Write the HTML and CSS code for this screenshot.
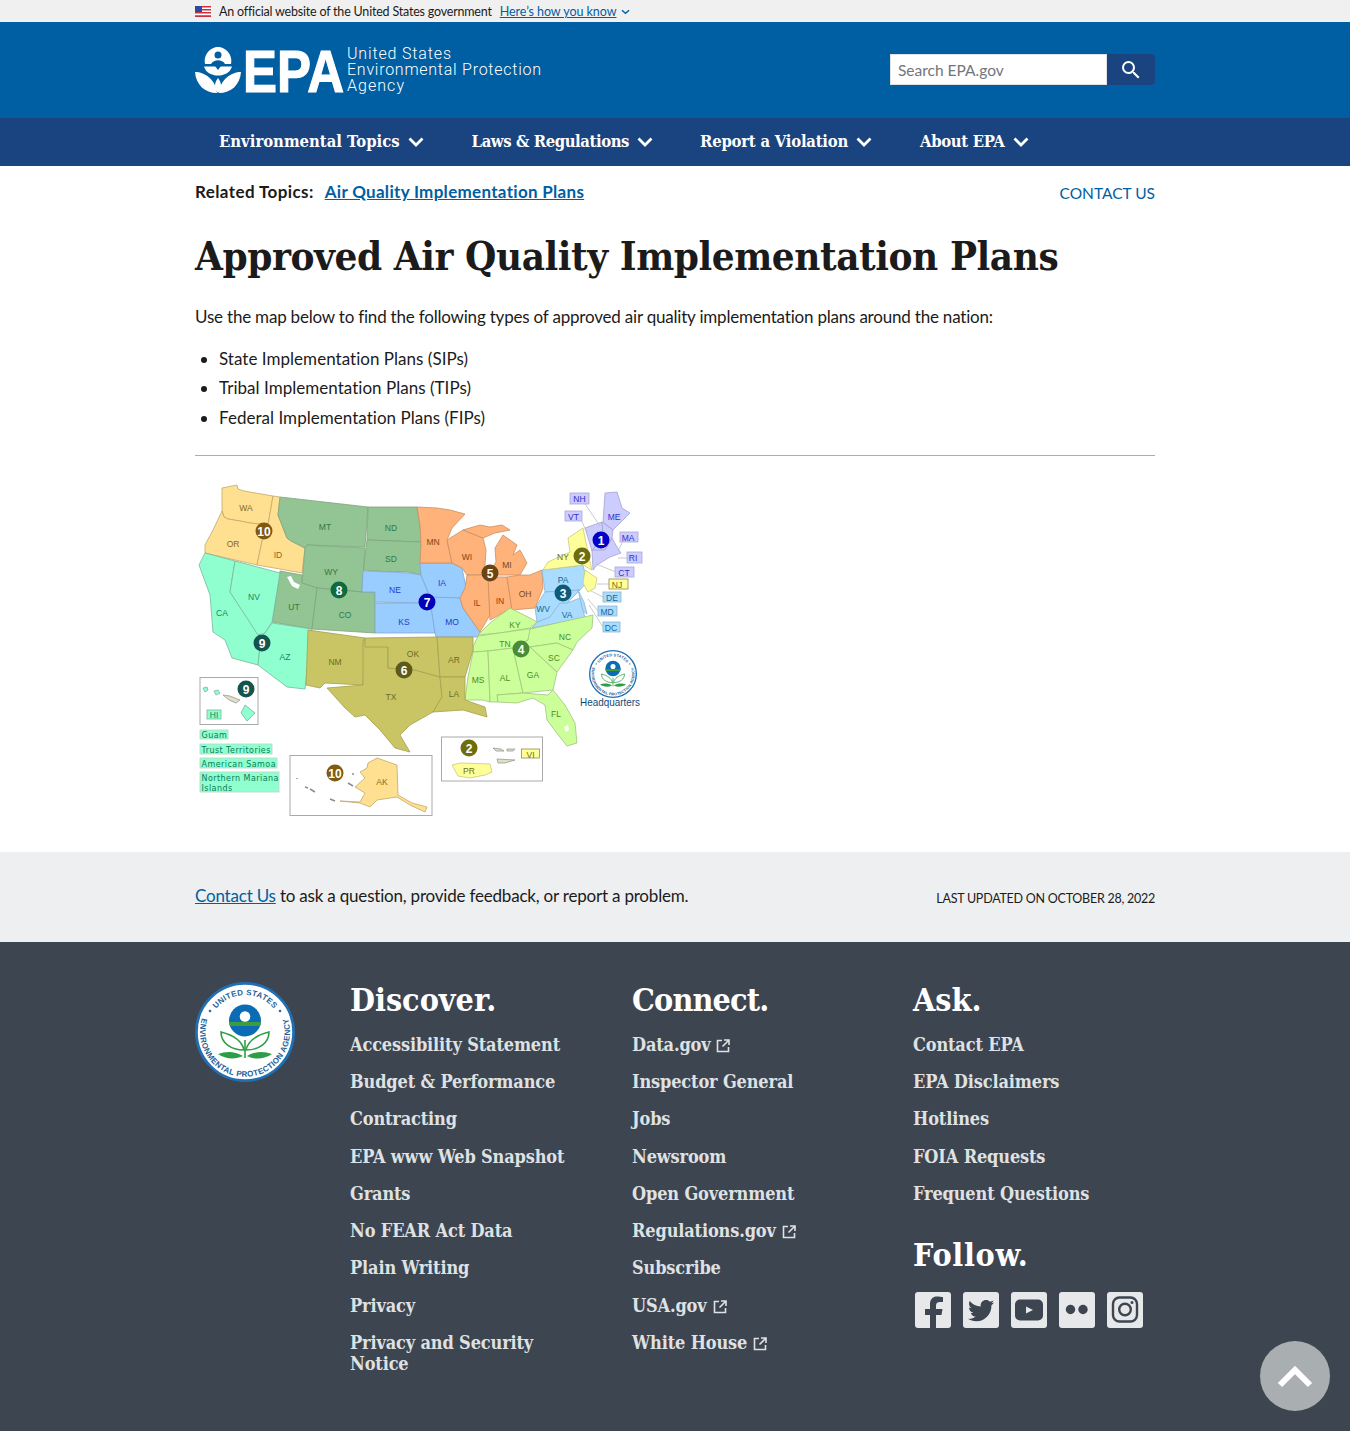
FILE: index.html
```html
<!DOCTYPE html>
<html lang="en">
<head>
<meta charset="utf-8">
<title>Approved Air Quality Implementation Plans | US EPA</title>
<link rel="stylesheet" href="styles.css">
</head>
<body>
<svg class="defs" width="0" height="0" aria-hidden="true">
  <defs>
    <path id="arcTop" d="M13 50a37 37 0 0 1 74 0"/>
    <path id="arcBottom" d="M13 24.200A45 45 0 1 0 87 24.200"/>
    <symbol id="seal" viewBox="0 0 100 100">
      <circle cx="50" cy="50" r="48.600" fill="#fff" stroke="#1f6fb2" stroke-width="2.800"/>
      <text class="seal-text"><textPath href="#arcTop" startOffset="50%" text-anchor="middle">UNITED STATES</textPath></text>
      <text class="seal-text"><textPath href="#arcBottom" startOffset="50%" text-anchor="middle">ENVIRONMENTAL PROTECTION AGENCY</textPath></text>
      <circle cx="15" cy="29" r="1.300" fill="#1f6fb2"/><circle cx="85" cy="29" r="1.300" fill="#1f6fb2"/>
      <circle cx="50" cy="38.500" r="16" fill="#0b6cb5"/>
      <path d="M34.300 40h31.400a16 16 0 0 1-.6 4H34.900a16 16 0 0 1-.6-4z" fill="#3f9c3a"/>
      <circle cx="50" cy="34.500" r="5.300" fill="#fff"/>
      <path d="M50 76V58" stroke="#2e9e46" stroke-width="1.600" fill="none"/>
      <path d="M49 68C47 59 38 53 26 50c0 11 10 18 23 18z" fill="#fff" stroke="#2e9e46" stroke-width="1.600"/>
      <path d="M51 68C53 59 62 53 74 50c0 11-10 18-23 18z" fill="#fff" stroke="#2e9e46" stroke-width="1.600"/>
      <path d="M48 74c-8-5-17-5-25-2 7 5 17 6 25 2zM52 74c8-5 17-5 25-2-7 5-17 6-25 2z" fill="#2e9e46"/>
    </symbol>
  </defs>
</svg>

<div class="gov-banner">
  <div class="wrap gov-inner">
    <svg class="flag" viewBox="0 0 16 11" width="16" height="11" aria-hidden="true">
      <rect width="16" height="11" fill="#fff"/>
      <path d="M0 0h16v1.500H0zM0 3h16v1.500H0zM0 6h16v1.500H0zM0 9.200h16V11H0z" fill="#c8313e"/>
      <rect width="7" height="6" fill="#2e4a9e"/>
    </svg>
    <span class="gov-text">An official website of the United States government</span>
    <a class="gov-link" href="#">Here’s how you know</a>
    <svg class="gov-chev" viewBox="0 0 10 6" width="9" height="6" aria-hidden="true"><path d="M1 1l4 3.500L9 1" fill="none" stroke="#005ea2" stroke-width="1.500"/></svg>
  </div>
</div>

<header class="site-header">
  <div class="wrap header-inner">
    <svg class="logo" viewBox="0 0 347 50" width="347" height="50" role="img" aria-label="EPA United States Environmental Protection Agency">
      <path d="M10 18C8 8 16 1 23 1s15 7 13 17z" fill="#fff"/>
      <circle cx="23" cy="9" r="3.500" fill="#005ea2"/>
      <path d="M16 18c3-5 11-5 14 0z" fill="#005ea2"/>
      <path d="M9 20.500h28C35 27 29 29.500 23 29.500S11 27 9 20.500z" fill="#fff"/>
      <path d="M20 20h6l-3 4z" fill="#005ea2"/>
      <path d="M0 26c10 0 21 8 22 21C10 47 1 39 0 26zM46 26c-10 0-21 8-22 21 12 0 21-8 22-21z" fill="#fff"/>
      <path d="M23 32c4 5 4 10 0 15-4-5-4-10 0-15z" fill="#fff"/>
      <text class="logo-epa" x="48" y="45.500" textLength="101" lengthAdjust="spacingAndGlyphs">EPA</text>
      <text class="logo-line" x="152" y="13" textLength="104" lengthAdjust="spacing">United States</text>
      <text class="logo-line" x="152" y="29" textLength="194" lengthAdjust="spacing">Environmental Protection</text>
      <text class="logo-line" x="152" y="45" textLength="57" lengthAdjust="spacing">Agency</text>
    </svg>
    <form class="search">
      <input class="search-input" type="text" placeholder="Search EPA.gov" aria-label="Search">
      <button class="search-btn" type="button" aria-label="Search">
        <svg viewBox="0 0 24 24" width="24" height="24"><path d="M15.500 14h-.79l-.28-.27A6.470 6.470 0 0 0 16 9.500 6.500 6.500 0 1 0 9.500 16c1.610 0 3.090-.59 4.230-1.570l.27.28v.79l5 4.990L20.490 19l-4.990-5zm-6 0C7.010 14 5 11.990 5 9.500S7.010 5 9.500 5 14 7.010 14 9.500 11.990 14 9.500 14z" fill="#fff"/></svg>
      </button>
    </form>
  </div>
</header>

<nav class="main-nav">
  <div class="wrap nav-inner">
    <a class="nav-item nav-1" href="#">Environmental Topics<svg class="nav-chev" viewBox="0 0 16 10" width="16" height="10"><path d="M1.500 1.500L8 8l6.500-6.500" fill="none" stroke="#fff" stroke-width="2.800"/></svg></a>
    <a class="nav-item nav-2" href="#">Laws &amp; Regulations<svg class="nav-chev" viewBox="0 0 16 10" width="16" height="10"><path d="M1.500 1.500L8 8l6.500-6.500" fill="none" stroke="#fff" stroke-width="2.800"/></svg></a>
    <a class="nav-item nav-3" href="#">Report a Violation<svg class="nav-chev" viewBox="0 0 16 10" width="16" height="10"><path d="M1.500 1.500L8 8l6.500-6.500" fill="none" stroke="#fff" stroke-width="2.800"/></svg></a>
    <a class="nav-item nav-4" href="#">About EPA<svg class="nav-chev" viewBox="0 0 16 10" width="16" height="10"><path d="M1.500 1.500L8 8l6.500-6.500" fill="none" stroke="#fff" stroke-width="2.800"/></svg></a>
  </div>
</nav>

<main class="wrap content">
  <div class="topic-row">
    <div class="related"><strong class="related-label">Related Topics:</strong><a class="related-link" href="#">Air Quality Implementation Plans</a></div>
    <a class="contact-top" href="#">CONTACT US</a>
  </div>
  <h1 class="page-title">Approved Air Quality Implementation Plans</h1>
  <p class="intro">Use the map below to find the following types of approved air quality implementation plans around the nation:</p>
  <ul class="plan-list">
    <li>State Implementation Plans (SIPs)</li>
    <li>Tribal Implementation Plans (TIPs)</li>
    <li>Federal Implementation Plans (FIPs)</li>
  </ul>
  <hr class="rule">
  <svg class="region-map" viewBox="195 480 450 340" width="450" height="340" role="img" aria-label="Map of EPA regions">
    <g class="r10">
      <polygon points="222,488 237,485 238,489 244,491 273,496 268,525 250,523 240,521 228,519 224,517 222,510"/>
      <polygon points="222,511 224,517 228,519 240,521 250,523 268,525 264,535 262,541 257,565 222,557 205,553 205,545 213,530"/>
      <polygon points="273,496 280,497 278,515 287,538 291,541 305,548 302,573 280,569 257,565 262,541 268,525"/>
    </g>
    <g class="r8">
      <polygon points="280,497 368,507 365,547 307,545 305,548 291,541 287,538 278,515"/>
      <polygon points="368,507 417,507 420,525 422,542 367,540"/>
      <polygon points="367,540 422,542 421,575 408,572 390,572 363,570"/>
      <polygon points="307,545 365,548 362,592 317,588 302,583 305,548"/>
      <polygon points="280,571 302,575 302,583 317,588 312,629 272,622"/>
      <polygon points="317,588 362,592 375,592 375,633 312,629"/>
    </g>
    <polygon class="lake" points="287,577 291,576 294,582 300,585 298,589 292,586"/>
    <g class="r9">
      <polygon points="205,553 235,561 230,592 261,637 258,665 232,658 225,640 213,632 210,595 199,565"/>
      <polygon points="235,561 280,573 272,622 265,633 258,635 230,592"/>
      <polygon points="272,623 312,629 305,689 287,687 258,665 261,637 265,633"/>
    </g>
    <g class="r7">
      <polygon points="363,571 390,572 408,573 421,575 427,590 430,603 375,602 375,592 362,592"/>
      <polygon points="375,603 430,603 431,606 435,633 375,633"/>
      <polygon points="420,563 452,563 462,568 466,587 460,598 435,598 430,596 426,587 421,575"/>
      <polygon points="430,597 460,598 463,608 470,618 480,632 478,637 436,637 435,633 431,606"/>
    </g>
    <g class="r5">
      <polygon points="417,507 437,508 450,510 465,514 452,528 447,540 452,563 420,563 421,545 420,525"/>
      <polygon points="447,540 463,530 483,538 486,550 485,565 482,575 467,575 462,568 452,563"/>
      <polygon points="463,530 480,525 490,527 502,525 510,530 495,533 483,538"/>
      <polygon points="495,548 503,535 517,545 513,555 520,550 527,563 520,575 488,575 496,562"/>
      <polygon points="467,575 488,575 490,615 480,632 463,608 460,598 465,588"/>
      <polygon points="488,577 507,577 512,608 490,620"/>
      <polygon points="507,577 520,575 530,575 542,570 543,588 535,608 512,610"/>
    </g>
    <g class="r3">
      <polygon points="542,570 583,565 587,582 580,590 545,592"/>
      <polygon points="532,628 585,618 580,598 567,603 555,600 550,617 537,622"/>
      <polygon points="545,592 580,590 567,603 560,603 550,617 537,622 535,608"/>
      <polygon points="578,590 584,602 587,614 583,611 580,598"/>
    </g>
    <g class="r2">
      <polygon points="548,562 570,552 568,538 583,528 590,562 592,570 583,565 543,570"/>
      <polygon points="585,570 597,578 595,588 588,592 583,583"/>
    </g>
    <g class="r1">
      <polygon points="605,493 617,492 622,508 630,513 613,530 603,522"/>
      <polygon points="585,528 602,522 603,535 592,551"/>
      <polygon points="602,522 613,530 612,538 605,550 592,551 603,535"/>
      <polygon points="592,550 605,550 612,538 617,547 621,553 610,557 597,565 593,570"/>
    </g>
    <g class="r4">
      <polygon points="478,635 490,623 510,608 530,618 537,622 530,628 500,633"/>
      <polygon points="473,647 478,636 535,628 528,640 513,648 488,651 473,652"/>
      <polygon points="530,629 593,615 592,628 577,642 573,650 557,643 530,647 513,648 528,640"/>
      <polygon points="473,652 488,651 490,702 483,700 465,700 468,677"/>
      <polygon points="488,651 513,648 523,693 497,695 498,702 490,702"/>
      <polygon points="513,648 530,647 557,672 553,690 523,693"/>
      <polygon points="530,647 557,643 573,650 557,672"/>
      <polygon points="497,695 523,693 548,695 553,690 565,705 575,723 577,743 567,746 556,732 547,720 545,705 533,698 517,703 498,702"/>
    </g>
    <polygon class="lake" points="564,727 568,725 569,730 566,732"/>
    <g class="r6">
      <polygon points="308,630 365,638 363,685 325,683 320,688 306,685"/>
      <polygon points="363,640 388,640 388,668 415,670 440,677 442,697 433,712 410,725 400,735 410,752 395,748 380,730 365,715 355,717 345,708 327,688 363,685"/>
      <polygon points="365,638 437,637 440,677 415,670 388,668 388,647 365,647"/>
      <polygon points="437,637 473,637 473,650 465,677 440,677"/>
      <polygon points="440,677 465,677 465,700 485,707 487,717 463,710 433,712 442,697"/>
    </g>
    <g class="labels">
      <text class="l10" x="246" y="511">WA</text><text class="l10" x="233" y="547">OR</text><text class="l10" x="278" y="558">ID</text>
      <text class="l8" x="325" y="530">MT</text><text class="l8" x="391" y="531">ND</text><text class="l8" x="391" y="562">SD</text><text class="l8" x="331" y="575">WY</text><text class="l8" x="294" y="610">UT</text><text class="l8" x="345" y="618">CO</text>
      <text class="l9" x="222" y="616">CA</text><text class="l9" x="254" y="600">NV</text><text class="l9" x="285" y="660">AZ</text>
      <text class="l7" x="395" y="593">NE</text><text class="l7" x="404" y="625">KS</text><text class="l7" x="442" y="586">IA</text><text class="l7" x="452" y="625">MO</text>
      <text class="l5" x="433" y="545">MN</text><text class="l5" x="467" y="560">WI</text><text class="l5" x="507" y="568">MI</text><text class="l5" x="477" y="606">IL</text><text class="l5" x="500" y="604">IN</text><text class="l5" x="525" y="597">OH</text>
      <text class="l3" x="563" y="583">PA</text><text class="l3" x="543" y="612">WV</text><text class="l3" x="567" y="618">VA</text>
      <text class="l2" x="563" y="560">NY</text><text class="l1" x="614" y="520">ME</text>
      <text class="l4" x="515" y="628">KY</text><text class="l4" x="505" y="647">TN</text><text class="l4" x="565" y="640">NC</text><text class="l4" x="554" y="661">SC</text><text class="l4" x="533" y="678">GA</text><text class="l4" x="505" y="681">AL</text><text class="l4" x="478" y="683">MS</text><text class="l4" x="556" y="717">FL</text>
      <text class="l6" x="454" y="663">AR</text><text class="l6" x="454" y="697">LA</text><text class="l6" x="413" y="657">OK</text><text class="l6" x="391" y="700">TX</text><text class="l6" x="335" y="665">NM</text>
    </g>
    <path class="leaders" d="M585 504l15 22M581 520l6 12M623 541l-5 10M627 558h-9M616 572l-20-8M609 584h-12M603 597l-12-6M598 611l-10-12M603 627l-14-22"/>
    <g class="tags">
      <rect class="tag1" x="570" y="493" width="19" height="11"/><text class="l1" x="579.500" y="502">NH</text>
      <rect class="tag1" x="565" y="511" width="17" height="10"/><text class="l1" x="573.500" y="519.500">VT</text>
      <rect class="tag1" x="620" y="532" width="18" height="10"/><text class="l1" x="628" y="540.500">MA</text>
      <rect class="tag1" x="627" y="552" width="15" height="11"/><text class="l1" x="633" y="561">RI</text>
      <rect class="tag1" x="615" y="567" width="19" height="10"/><text class="l1" x="624" y="575.500">CT</text>
      <rect class="tag2" x="609" y="579" width="19" height="10"/><text class="l2" x="617" y="587.500">NJ</text>
      <rect class="tag3" x="603" y="592" width="18" height="10"/><text class="l3" x="612" y="600.500">DE</text>
      <rect class="tag3" x="598" y="606" width="19" height="10"/><text class="l3" x="607" y="614.500">MD</text>
      <rect class="tag3" x="603" y="622" width="17" height="10"/><text class="l3" x="611" y="630.500">DC</text>
    </g>
    <g class="inset-boxes">
      <rect x="200" y="677.500" width="58" height="47"/>
      <rect x="290" y="755.500" width="142" height="60"/>
      <rect x="441.500" y="737" width="101" height="44"/>
    </g>
    <g class="r9">
      <polygon points="203,688 207,687 208,690 205,692"/>
      <polygon points="214,691 218,690 220,693 216,695"/>
      <polygon class="dim" points="223,695 230,696 240,700 236,703 229,700"/>
      <polygon points="245,705 255,713 247,721 241,713"/>
    </g>
    <g class="tags tags9">
      <rect x="207" y="710" width="14" height="9"/><text x="214" y="718">HI</text>
    </g>
    <g class="territories">
      <rect x="200" y="730" width="28" height="9"/><text x="201.500" y="738">Guam</text>
      <rect x="200" y="744" width="72" height="10"/><text x="201.500" y="752.500">Trust Territories</text>
      <rect x="200" y="758" width="77" height="10"/><text x="201.500" y="766.500">American Samoa</text>
      <rect x="200" y="772" width="79" height="20"/><text x="201.500" y="780.500">Northern Mariana</text><text x="201.500" y="791">Islands</text>
    </g>
    <g class="r10">
      <polygon points="368,763 377,758 397,765 398,795 412,803 427,807 425,812 410,805 397,797 377,800 370,807 360,803 340,801 360,802 365,793 355,787 365,778 360,772 367,768"/>
    </g>
    <path class="island" d="M297 778v1M305 787l3 1M310 789l5 3M330 799l5 2M348 783l5 3M353 773v2"/>
    <text class="l10 map-label" x="382" y="785">AK</text>
    <g class="r2">
      <polygon points="452,765 460,763 490,764 492,772 485,775 470,778 458,776"/>
      <polygon class="dim" points="493,748 501,749 504,751 496,751"/>
      <polygon class="dim" points="507,749 515,749 513,751 507,751"/>
      <polygon class="dim" points="497,759 515,760 505,763 498,763"/>
      <rect class="tag-vi" x="521.500" y="749" width="18" height="9"/>
    </g>
    <text class="l2 map-label" x="469" y="774">PR</text><text class="l2 map-label" x="530.500" y="757.500">VI</text>
    <g class="badges">
      <circle class="b10" cx="264" cy="531" r="8.500"/><text x="264" y="535.500">10</text>
      <circle class="b8" cx="339" cy="590" r="8.500"/><text x="339" y="594.500">8</text>
      <circle class="b9" cx="262" cy="643" r="8.500"/><text x="262" y="647.500">9</text>
      <circle class="b7" cx="427" cy="602" r="8.500"/><text x="427" y="606.500">7</text>
      <circle class="b5" cx="490" cy="573" r="8.500"/><text x="490" y="577.500">5</text>
      <circle class="b2" cx="582" cy="556" r="8.500"/><text x="582" y="560.500">2</text>
      <circle class="b1" cx="601" cy="540" r="8.500"/><text x="601" y="544.500">1</text>
      <circle class="b3" cx="563" cy="593" r="8.500"/><text x="563" y="597.500">3</text>
      <circle class="b4" cx="521" cy="649" r="8.500"/><text x="521" y="653.500">4</text>
      <circle class="b6" cx="404" cy="670" r="8.500"/><text x="404" y="674.500">6</text>
      <circle class="b9" cx="246" cy="689" r="8.500"/><text x="246" y="693.500">9</text>
      <circle class="b10" cx="335" cy="773" r="8.500"/><text x="335" y="777.500">10</text>
      <circle class="b2" cx="469" cy="748" r="8.500"/><text x="469" y="752.500">2</text>
    </g>
    <use href="#seal" x="589" y="650" width="48" height="48"/>
    <text class="hq" x="610" y="706" textLength="60" lengthAdjust="spacingAndGlyphs">Headquarters</text>
  </svg>
</main>

<section class="feedback">
  <div class="wrap feedback-inner">
    <p class="feedback-text"><a href="#">Contact Us</a> to ask a question, provide feedback, or report a problem.</p>
    <p class="updated">LAST UPDATED ON OCTOBER 28, 2022</p>
  </div>
</section>

<footer class="site-footer">
  <div class="wrap footer-grid">
    <svg class="footer-seal" width="100" height="100" role="img" aria-label="EPA seal"><use href="#seal" width="100" height="100"/></svg>
    <div class="footer-col">
      <h2 class="footer-title">Discover.</h2>
      <ul class="footer-links">
        <li><a href="#">Accessibility Statement</a></li>
        <li><a href="#">Budget &amp; Performance</a></li>
        <li><a href="#">Contracting</a></li>
        <li><a href="#">EPA www Web Snapshot</a></li>
        <li><a href="#">Grants</a></li>
        <li><a href="#">No FEAR Act Data</a></li>
        <li><a href="#">Plain Writing</a></li>
        <li><a href="#">Privacy</a></li>
        <li><a href="#">Privacy and Security Notice</a></li>
      </ul>
    </div>
    <div class="footer-col">
      <h2 class="footer-title title-connect">Connect.</h2>
      <ul class="footer-links">
        <li><a href="#">Data.gov<svg class="ext" viewBox="0 0 14 14" width="14" height="14"><path d="M6 1.500H1.500v11h11V8M8 1h5v5M13 1L6.500 7.500" fill="none" stroke="#dfe1e2" stroke-width="1.600"/></svg></a></li>
        <li><a href="#">Inspector General</a></li>
        <li><a href="#">Jobs</a></li>
        <li><a href="#">Newsroom</a></li>
        <li><a href="#">Open Government</a></li>
        <li><a href="#">Regulations.gov<svg class="ext" viewBox="0 0 14 14" width="14" height="14"><path d="M6 1.500H1.500v11h11V8M8 1h5v5M13 1L6.500 7.500" fill="none" stroke="#dfe1e2" stroke-width="1.600"/></svg></a></li>
        <li><a href="#">Subscribe</a></li>
        <li><a href="#">USA.gov<svg class="ext" viewBox="0 0 14 14" width="14" height="14"><path d="M6 1.500H1.500v11h11V8M8 1h5v5M13 1L6.500 7.500" fill="none" stroke="#dfe1e2" stroke-width="1.600"/></svg></a></li>
        <li><a href="#">White House<svg class="ext" viewBox="0 0 14 14" width="14" height="14"><path d="M6 1.500H1.500v11h11V8M8 1h5v5M13 1L6.500 7.500" fill="none" stroke="#dfe1e2" stroke-width="1.600"/></svg></a></li>
      </ul>
    </div>
    <div class="footer-col">
      <h2 class="footer-title">Ask.</h2>
      <ul class="footer-links">
        <li><a href="#">Contact EPA</a></li>
        <li><a href="#">EPA Disclaimers</a></li>
        <li><a href="#">Hotlines</a></li>
        <li><a href="#">FOIA Requests</a></li>
        <li><a href="#">Frequent Questions</a></li>
      </ul>
      <h2 class="footer-title follow">Follow.</h2>
      <div class="social">
        <a class="social-icon" href="#" aria-label="Facebook"><svg viewBox="0 0 36 36" width="36" height="36"><rect width="36" height="36" rx="3" fill="#e6e8ea"/><path d="M15 36V23h-5v-6h5v-5c0-5 3-7.500 7-7.500 2 0 4.500.3 6 .6V10h-3c-2.500 0-4 1-4 3.500V17h6.500l-1 6H21v13z" fill="#3d4551"/></svg></a>
        <a class="social-icon" href="#" aria-label="Twitter"><svg viewBox="0 0 36 36" width="36" height="36"><rect width="36" height="36" rx="3" fill="#e6e8ea"/><g transform="translate(3 3) scale(1.250)"><path d="M22.460 6c-.77.35-1.600.58-2.460.69.88-.53 1.560-1.370 1.880-2.380-.83.5-1.750.85-2.720 1.050C18.370 4.500 17.260 4 16 4c-2.350 0-4.270 1.920-4.270 4.290 0 .34.04.67.11.98C8.280 9.090 5.110 7.380 3 4.790c-.37.63-.58 1.370-.58 2.150 0 1.490.75 2.810 1.910 3.560-.71 0-1.370-.2-1.950-.5v.03c0 2.080 1.480 3.820 3.440 4.210a4.220 4.220 0 0 1-1.930.07 4.280 4.280 0 0 0 4 2.980 8.521 8.521 0 0 1-5.330 1.840c-.34 0-.68-.02-1.020-.06C3.440 20.290 5.700 21 8.120 21 16 21 20.330 14.460 20.330 8.790c0-.19 0-.37-.01-.56.84-.6 1.560-1.360 2.140-2.230z" fill="#3d4551"/></g></svg></a>
        <a class="social-icon" href="#" aria-label="YouTube"><svg viewBox="0 0 36 36" width="36" height="36"><rect width="36" height="36" rx="3" fill="#e6e8ea"/><rect x="4" y="7.500" width="28" height="21" rx="5" fill="#3d4551"/><path d="M15 14.500l7 3.500-7 3.500z" fill="#e6e8ea"/></svg></a>
        <a class="social-icon" href="#" aria-label="Flickr"><svg viewBox="0 0 36 36" width="36" height="36"><rect width="36" height="36" rx="3" fill="#e6e8ea"/><circle cx="11.500" cy="17.500" r="4.700" fill="#3d4551"/><circle cx="24" cy="17.500" r="4.700" fill="#3d4551"/></svg></a>
        <a class="social-icon" href="#" aria-label="Instagram"><svg viewBox="0 0 36 36" width="36" height="36"><rect width="36" height="36" rx="3" fill="#e6e8ea"/><rect x="6" y="5.500" width="24" height="24" rx="6.500" fill="none" stroke="#3d4551" stroke-width="2.400"/><circle cx="18" cy="17.500" r="5.800" fill="none" stroke="#3d4551" stroke-width="2.400"/><circle cx="25" cy="10.500" r="1.500" fill="#3d4551"/></svg></a>
      </div>
    </div>
  </div>
</footer>

<a class="to-top" href="#" aria-label="Back to top"><svg viewBox="0 0 36 24" width="36" height="24"><path d="M3 21L18 6l15 15" fill="none" stroke="#fff" stroke-width="6"/></svg></a>
</body>
</html>
```
FILE: styles.css
```css
* { box-sizing: border-box; }
html, body { margin: 0; padding: 0; }
body {
  font-family: "Lato", "Liberation Sans", sans-serif;
  font-size: 17px;
  line-height: 1.5;
  color: #1b1b1b;
  background: #fff;
}
a { color: #005ea2; }
.defs { position: absolute; }
.wrap { width: 960px; margin: 0 auto; }

.gov-banner { height: 22px; background: #f0f0f0; font-size: 12.500px; line-height: 20px; }
.gov-inner { display: flex; align-items: center; height: 22px; }
.flag { margin-right: 8px; }
.gov-text { margin-right: 8px; padding-top: 2px; letter-spacing: -.2px; }
.gov-link { padding-top: 2px; letter-spacing: -.05px; }
.gov-chev { margin: 2px 0 0 5px; }

.site-header { height: 96px; background: #005ea2; }
.header-inner { height: 96px; display: flex; align-items: center; justify-content: space-between; }
.logo { display: block; margin-top: 1px; overflow: visible; }
.logo-epa { font-family: "Liberation Sans", sans-serif; font-weight: 700; font-size: 60px; fill: #fff; stroke: #fff; stroke-width: 1.200px; }
.logo-line { font-family: "Roboto", sans-serif; font-weight: 300; font-size: 16px; fill: #fff; }
.search { display: flex; margin-bottom: 1px; }
.search-input { width: 217px; height: 31px; border: 1px solid #dfe1e2; border-radius: 0; padding: 0 7px; font: 15.500px "Lato", sans-serif; background: #fff; }
.search-input::placeholder { color: #71767a; opacity: 1; }
.search-btn { width: 48px; height: 31px; padding: 0; border: 0; border-radius: 0 4px 4px 0; background: #1a4480; display: flex; align-items: center; justify-content: center; }

.main-nav { height: 48px; background: #1a4480; }
.nav-inner { display: flex; height: 48px; align-items: center; }
.nav-item { display: flex; align-items: center; padding: 0 24px; color: #fff; text-decoration: none; font-family: "DejaVu Serif Condensed", "DejaVu Serif", serif; font-weight: 700; font-size: 16.500px; }
.nav-1 { letter-spacing: 0; }
.nav-2 { letter-spacing: -.4px; margin-right: -1px; }
.nav-3 { letter-spacing: -.22px; }
.nav-4 { letter-spacing: -.33px; }
.nav-chev { margin-left: 8px; }

.content { padding-top: 12px; }
.topic-row { display: flex; justify-content: space-between; align-items: center; height: 27px; }
.related { display: flex; font-size: 17px; }
.related-label { margin-right: 11px; color: #1b1b1b; letter-spacing: .4px; }
.related-link { font-weight: 700; letter-spacing: .3px; }
.contact-top { text-decoration: none; margin-top: 4px; font-size: 15.500px; }
.page-title { margin: 25px 0 0; font-family: "DejaVu Serif Condensed", "DejaVu Serif", serif; font-weight: 700; font-size: 40px; line-height: 52px; color: #1b1b1b; letter-spacing: -.44px; }
.intro { margin: 22px 0 0; font-size: 17px; line-height: 26px; letter-spacing: -.2px; }
.plan-list { margin: 15.700px 0 0; padding: 0 0 0 24px; }
.plan-list li { height: 29.500px; line-height: 26px; letter-spacing: .03px; }
.rule { margin: 20.800px 0 0; border: 0; border-top: 1px solid #a9aeb1; }
.region-map { display: block; margin-top: 24px; margin-bottom: 32px; }

.r10 polygon { fill: #ffdf90; stroke: #c2a96a; stroke-width: .8; }
.r8 polygon { fill: #93c493; stroke: #7da57d; stroke-width: .8; }
.r9 polygon { fill: #8fffcf; stroke: #75b99c; stroke-width: .8; }
.r7 polygon { fill: #99ccff; stroke: #80a8cf; stroke-width: .8; }
.r5 polygon { fill: #ffb27a; stroke: #c98f62; stroke-width: .8; }
.r3 polygon { fill: #aadcff; stroke: #8cb5d2; stroke-width: .8; }
.r2 polygon { fill: #ffff99; stroke: #c9c97a; stroke-width: .8; }
.r1 polygon { fill: #ccccff; stroke: #a3a3cf; stroke-width: .8; }
.r4 polygon { fill: #ccff99; stroke: #9fc47c; stroke-width: .8; }
.r6 polygon { fill: #c9c564; stroke: #a3a050; stroke-width: .8; }
.region-map .dim { fill: #dfe0c8; stroke: #999; }
.lake { fill: #fff; }
.labels text, .tags text, .map-label { font-family: "Liberation Sans", sans-serif; font-size: 8.500px; text-anchor: middle; }
.l10 { fill: #7d6a2c; }
.l8 { fill: #2f7a44; }
.l9 { fill: #0e8a63; }
.l7 { fill: #1f3cc4; }
.l5 { fill: #7a4a18; }
.l3 { fill: #0f6a94; }
.l2 { fill: #6e6e14; }
.l1 { fill: #2f2fc7; }
.l4 { fill: #4a8c22; }
.l6 { fill: #6d6a24; }
.leaders { fill: none; stroke: #b9bdc3; stroke-width: .8; }
.tags rect { stroke-width: .8; }
.tag1 { fill: #ccccff; stroke: #a9a9d9; }
.tag2 { fill: #ffff99; stroke: #8d8d55; }
.tag3 { fill: #aadcff; stroke: #8cb5d2; }
.tag-vi { fill: #ffff99; stroke: #8d8d55; stroke-width: .8; }
.inset-boxes rect { fill: #fff; stroke: #aaa; stroke-width: 1; }
.tags9 rect { fill: #8fffcf; stroke: #75b99c; }
.tags9 text { fill: #0e8a63; }
.territories rect { fill: #8fffcf; stroke: #b5d6c8; stroke-width: .8; }
.territories text { font-family: "DejaVu Sans", sans-serif; font-size: 8px; letter-spacing: .45px; fill: #0a7d58; }
.island { fill: none; stroke: #8a8f8c; stroke-width: 1.500; }
.badges text { font-family: "Liberation Sans", sans-serif; font-weight: 700; font-size: 12px; fill: #fff; text-anchor: middle; }
.b10 { fill: #7f5a10; }
.b8 { fill: #0e6a3f; }
.b9 { fill: #14544e; }
.b7 { fill: #0000b8; }
.b5 { fill: #6a4412; }
.b2 { fill: #6e6e0c; }
.b1 { fill: #0000c8; }
.b3 { fill: #0e5a78; }
.b4 { fill: #4a8c36; }
.b6 { fill: #5c5a1c; }
.hq { font-family: "Liberation Sans", sans-serif; font-size: 10.500px; fill: #0d4a78; text-anchor: middle; }
.seal-text { font-family: "Liberation Sans", sans-serif; font-weight: 700; font-size: 8px; letter-spacing: .3px; fill: #1f5f99; }

.feedback { height: 90px; background: #edeff0; }
.feedback-inner { height: 90px; display: flex; align-items: center; justify-content: space-between; }
.feedback-text { margin: 0 0 2px; letter-spacing: -.2px; }
.updated { margin: 4px 0 0; font-size: 12.500px; letter-spacing: -.25px; }

.site-footer { height: 489px; background: #3d4551; overflow: hidden; }
.footer-grid { display: grid; grid-template-columns: 155px 282px 281px 242px; padding-top: 40px; }
.footer-seal { display: block; }
.footer-title { margin: 0; font-family: "DejaVu Serif Condensed", "DejaVu Serif", serif; font-weight: 700; font-size: 32px; line-height: 36px; color: #fff; }
.title-connect { letter-spacing: -.85px; }
.footer-links { list-style: none; margin: 16px 0 0; padding: 0; width: 240px; }
.footer-links li { margin-bottom: 16.250px; line-height: 21px; }
.footer-links a { color: #dfe1e2; text-decoration: none; font-family: "DejaVu Serif Condensed", "DejaVu Serif", serif; font-weight: 700; font-size: 18px; letter-spacing: -.15px; }
.ext { margin-left: 6px; vertical-align: -2px; }
.follow { margin-top: 33px; letter-spacing: .7px; }
.social { display: flex; gap: 12px; margin: 19px 0 0 2px; }
.social-icon { display: block; width: 36px; height: 36px; }
.social-icon svg { display: block; }
.to-top { position: fixed; right: 20px; bottom: 20px; width: 70px; height: 70px; border-radius: 50%; background: #a9aeb1; display: flex; align-items: center; justify-content: center; }
```
